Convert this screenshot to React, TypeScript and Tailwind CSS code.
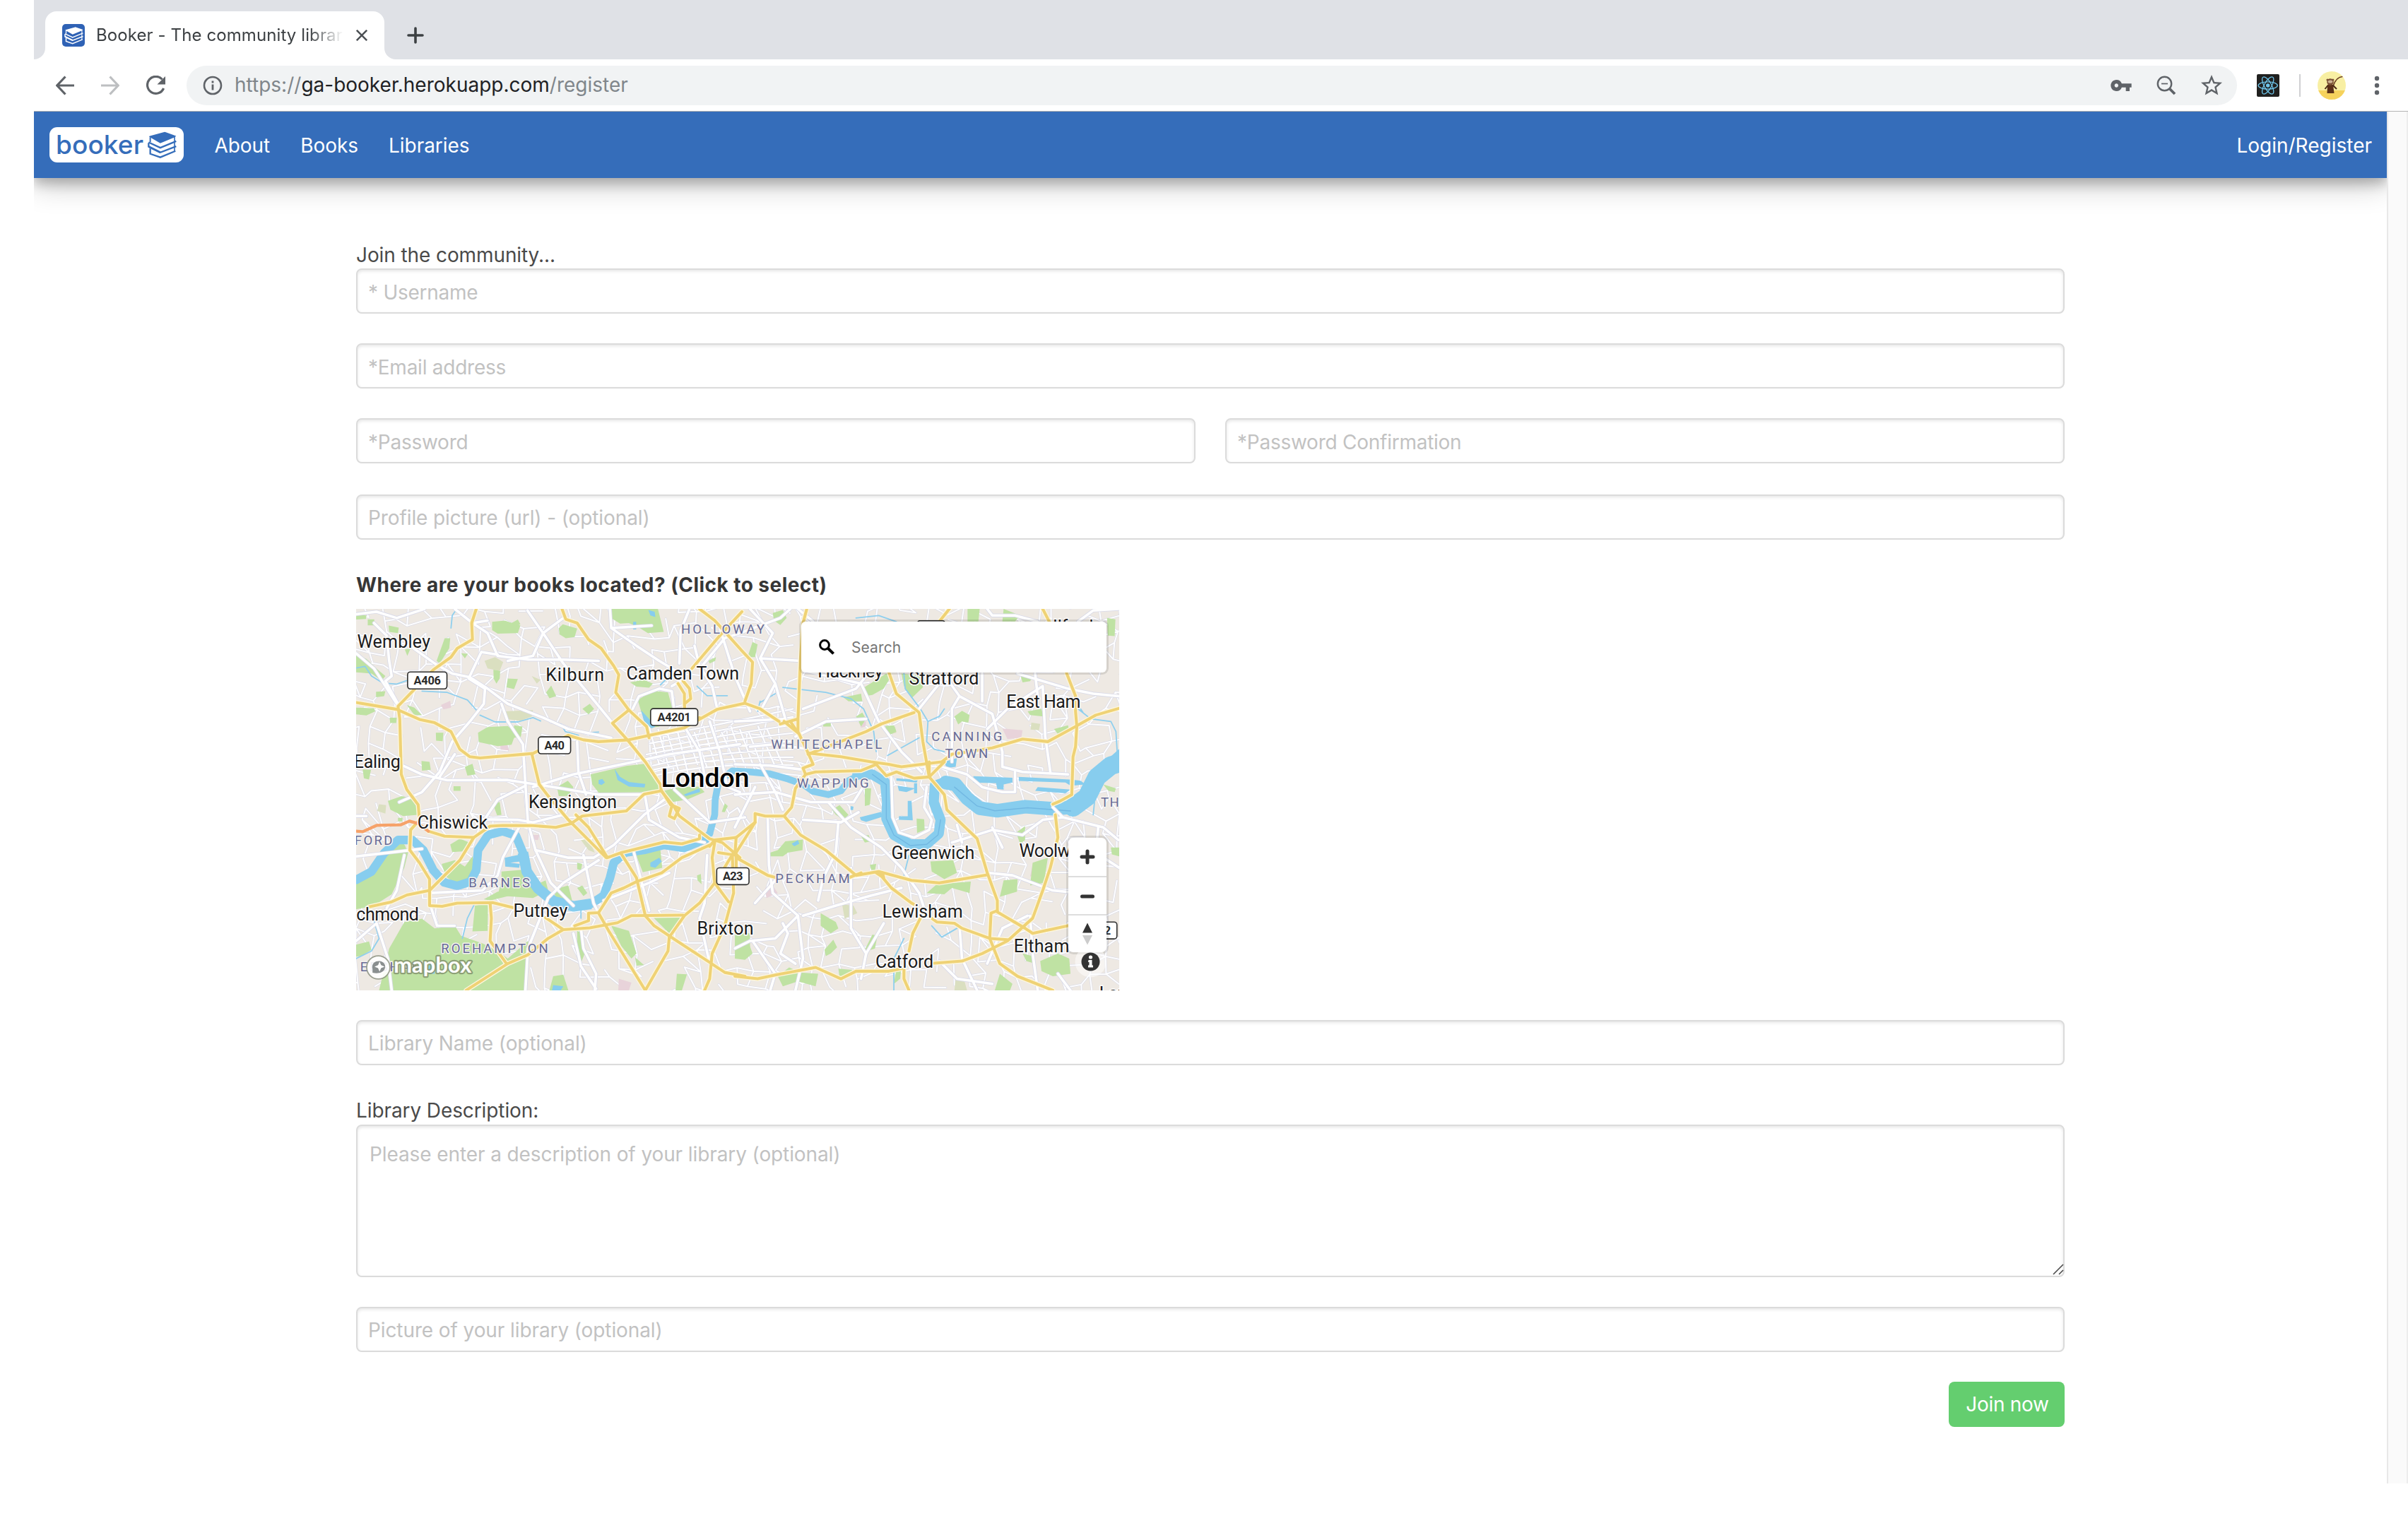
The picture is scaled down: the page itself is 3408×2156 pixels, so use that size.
import React from "react";
import { MdVpnKey, MdStarBorder } from "react-icons/md";

/* ---------- map data (map units: 2.8 per screen pixel) ---------- */

// Deterministic street mesh that fills the space between the main roads.
function streetMesh(): string {
  let seed = 11;
  const rnd = () => {
    seed = (seed * 16807) % 2147483647;
    return seed / 2147483647;
  };
  const step = 62;
  const cols = 52;
  const rows = 27;
  const pts: number[][][] = [];
  for (let r = 0; r < rows; r++) {
    pts.push([]);
    for (let c = 0; c < cols; c++) {
      const x = c * step + (rnd() - 0.5) * 46 + Math.sin(r * 0.5) * 24;
      const y = r * step + (rnd() - 0.5) * 46 + Math.sin(c * 0.45) * 26;
      pts[r].push([Math.round(x), Math.round(y)]);
    }
  }
  let d = "";
  for (let r = 0; r < rows - 1; r++) {
    for (let c = 0; c < cols - 1; c++) {
      const [x, y] = pts[r][c];
      const [rx, ry] = pts[r][c + 1];
      const [bx, by] = pts[r + 1][c];
      if (rnd() < 0.6) d += `M${x} ${y}L${rx} ${ry}`;
      if (rnd() < 0.6) d += `M${x} ${y}L${bx} ${by}`;
      if (rnd() < 0.1) d += `M${x} ${y}L${pts[r + 1][c + 1][0]} ${pts[r + 1][c + 1][1]}`;
    }
  }
  return d;
}

function cityMesh(): string {
  let d = "";
  for (let i = 0; i < 14; i++) {
    d += `M${1200 + i * 36} ${500 + (i % 3) * 12}L${1240 + i * 38} ${650 + (i % 4) * 12}`;
    if (i < 8) d += `M${1190 + (i % 3) * 12} ${545 + i * 22}Q1450 ${500 + i * 20} 1770 ${430 + i * 32}`;
  }
  return d;
}

const STREETS = streetMesh();
const CITY = cityMesh();

const PARKS = [
  "M1050 34H1235L1258 125 1195 130 1155 105 1120 90 1085 92 1052 72Z",
  "M578 85 628 80 690 100 680 130 600 132 578 118Z",
  "M655 90 680 76 690 95 670 104Z",
  "M842 110 858 95 915 112 905 145 870 150 845 135Z",
  "M39 215 80 232 125 275 155 300 140 318 100 290 39 285Z",
  "M390 150 412 150 408 190 370 250 358 240Z",
  "M232 195 255 190 242 220Z",
  "M168 100 208 108 205 130 170 125Z M85 75h26v24h-26Z M39 55 80 60 78 74 39 76Z",
  "M455 210 482 212 470 230Z M583 275 610 280 608 310 595 330 584 310Z",
  "M640 310 680 312 665 352 635 345Z M792 365 812 338 832 380 805 388Z",
  "M118 362 155 360 150 380 118 384Z M39 425 110 428 115 440 80 456 39 452Z",
  "M240 415 270 425 300 455 270 455Z M172 465 200 465 198 486 174 486Z",
  "M522 525 560 502 640 498 660 515 666 495 698 500 692 540 665 545 655 572 600 578 525 562Z",
  "M355 525 385 525 382 558 356 556Z M936 430 965 410 982 430 960 452Z",
  "M1155 395 1215 358 1275 365 1290 420 1300 450 1240 500 1205 505 1170 445Z",
  "M1125 325 1180 315 1215 330 1200 346 1150 342Z M1435 240 1465 225 1462 240 1440 250Z",
  "M968 690 1110 656 1200 646 1245 715 1235 760 1000 762 975 730Z",
  "M1258 755 1320 740 1400 738 1420 760 1350 790 1290 800 1262 775Z",
  "M835 740 878 715 900 740 880 775 842 776Z M298 637 330 640 335 672 300 675Z",
  "M470 660 500 648 512 690 480 695Z M65 670 98 672 90 710 70 705Z M425 737h28v18h-28Z",
  "M165 795 220 776 275 788 283 850 225 855 175 830Z",
  "M580 805 608 800 615 850 598 852Z M205 862h18v14h-18Z",
  "M39 1125 110 1080 160 990 225 955 245 1000 230 1060 180 1165 110 1210 39 1225Z",
  "M412 968 450 945 488 960 460 995 420 998Z",
  "M378 1045 430 1030 470 1055 500 1015 515 1060 485 1105 430 1120 395 1095Z",
  "M615 1075 700 1068 712 1095 720 1140 790 1110 800 1150 740 1180 600 1170 615 1110Z",
  "M825 1145 880 1130 895 1190 860 1200 828 1190Z M915 1140 935 1130 955 1160 940 1172Z",
  "M510 1210 562 1200 560 1310 500 1312Z M545 1185 600 1155 680 1150 650 1170 570 1190Z",
  "M230 1275 300 1262 350 1300 430 1290 455 1330 540 1360 600 1390 640 1420 720 1350 728 1390 712 1546H130L170 1380Z",
  "M1145 1000 1245 990 1252 1060 1175 1078Z M1390 1090 1405 1085 1408 1125 1392 1110Z",
  "M1218 1258 1330 1256 1280 1320Z M1050 1290 1120 1310 1150 1400 1130 1420 1090 1370Z",
  "M915 1310 940 1320 945 1400 925 1450 915 1390Z M1540 1320h60v80h-50Z",
  "M39 1365 90 1352 100 1385 60 1410 39 1412Z M820 1490 860 1484 880 1546H805Z",
  "M1310 1480 1350 1482 1330 1546H1305Z M1500 805 1512 815 1500 840 1488 838Z",
  "M1145 1415 1180 1446 1150 1448Z M915 1040 935 1045 930 1070 915 1065Z",
];

const PARKS_EAST = [
  "M150 50 190 38 205 70 180 98 155 80Z M70 165 90 175 80 225 50 225Z",
  "M922 34H970L965 84H922Z M1065 34 1130 60 1110 84 1060 84Z M505 350 600 290 620 300 590 350 545 375 515 380Z",
  "M660 290 740 300 745 345 700 388 670 340Z M430 385 500 370 505 400 450 400Z",
  "M870 460 900 438 930 455 925 485 900 480 885 492Z M480 460 505 445 520 470 500 500Z",
  "M1160 440 1215 430 1222 460 1170 455Z M1130 290 1180 300 1170 320 1140 325Z M1475 70 1508 75 1505 142 1478 140Z",
  "M1265 510 1320 495 1325 515 1280 530Z M595 498 630 495 640 520 610 535Z M350 482h30v18h-30Z",
  "M385 830 415 812 450 850 430 870 400 850Z M720 865 750 868 752 910 722 922Z M515 745 540 745 535 810 515 815Z",
  "M140 1000 170 990 200 955 270 948 268 990 210 1000 190 1015 140 1015Z",
  "M775 1035 865 1030 880 1080 830 1105 780 1075Z M760 1160 800 1125 935 1115 930 1160 860 1140 830 1165Z",
  "M1115 920 1150 895 1150 950 1130 965Z M1065 1110 1120 1105 1118 1155 1050 1175Z M1180 1040 1240 1020 1225 1120 1170 1130Z",
  "M340 1240 400 1275 410 1300 380 1320 340 1290Z M0 1330 50 1345 70 1400 40 1425 0 1420Z",
  "M170 1490 215 1455 260 1475 330 1480 320 1530 250 1510 190 1530Z M410 1460 465 1465 455 1490 415 1495Z",
  "M355 1385 390 1345 405 1375 380 1400 360 1410Z M545 1325 565 1330 555 1380 510 1395Z",
  "M1210 1430 1280 1400 1325 1420 1330 1480 1260 1490 1215 1470Z M1050 1480 1100 1520 1090 1546H1030Z",
  "M1140 1400 1180 1410 1190 1440 1155 1430Z M535 1048 560 1045 555 1070 540 1068Z M640 1460 660 1450 655 1500 630 1520Z",
  "M500 935 530 930 540 955 515 960Z M1460 730 1510 745 1505 760 1480 755Z M1490 980h34v35l-30-8Z",
];

const OLIVE = "M625 440 740 435 735 460 690 478 630 470Z M548 240 590 225 622 245 608 280 560 270Z M130 808 158 812 155 845 122 835Z M930 950 960 945 985 1000 960 990Z M575 1485 612 1495 600 1530 560 1530Z M1965 1205 2010 1210 2025 1240 1975 1262Z M2715 485 2750 490 2745 515 2712 512Z M2415 1500 2450 1510 2460 1546H2410Z M735 300 770 315 755 330Z M2135 505 2175 500 2180 525 2150 532Z";
const PINK = "M375 415 412 398 415 425 385 432Z M610 572 640 575 645 595 612 592Z M1080 1500 1130 1515 1120 1546H1078Z M2600 508 2680 515 2675 545 2620 550Z M1660 1140 1690 1130 1710 1160 1665 1180Z M2720 1045 2740 1035 2730 1085 2710 1095Z M740 930 765 930 760 950 742 948Z M2035 485 2060 480 2058 500 2040 505Z";

const THAMES_WEST =
  "M39 1108 100 1075 150 1002 205 950 262 950 305 990 345 1070 388 1118 440 1132 492 1115 515 1070 522 990 562 930 620 915 672 932 700 1000 715 1075 760 1142 822 1193 900 1213 970 1203 1020 1170 1045 1100 1060 1040 1100 1005";
const THAMES_MID =
  "M1095 1005 1180 993 1260 973 1340 985 1400 960 1440 925 1460 850 1462 790 1475 720 1530 676 1600 680 1680 688 1750 708 1812 730 1850 757 1910 770 1960 755 1990 715 2040 690";
const THAMES_LOOP =
  "M2025 690 2085 690 2135 720 2143 800 2140 865 2170 930 2235 967 2300 967 2348 925 2355 870 2328 800 2332 735 2380 718";
const THAMES_EAST =
  "M2375 722 2415 730 2460 785 2510 824 2580 834 2690 818 2800 826 2880 820 2935 780 2975 700 3030 655 3080 610";

const WATER_FILL = [
  "M1168 435 1200 470 1225 500 1210 508 1180 480Z",
  "M1063 668 1085 700 1120 720 1185 728 1182 742 1120 738 1075 712Z",
  "M1000 712 1015 708 1025 722 1012 732 1000 728Z",
  "M1338 770 1400 745 1402 760 1345 776Z",
  "M628 1020 688 1008 692 1035 650 1040 688 1045 685 1060 630 1055Z",
  "M1205 1040 1240 1020 1250 1035 1225 1060 1205 1055Z",
  "M1197 38 1222 45 1225 66 1205 60Z M1137 85h12v30h-12Z M820 1525 860 1530 850 1546H815Z",
  "M2485 697 2640 703 2640 722 2605 730 2605 750 2580 748 2575 725 2485 722Z",
  "M2665 700 2865 710 2910 715 2930 730 2870 735 2850 722 2665 716Z M2740 740 2870 750 2850 765 2730 755Z",
  "M2035 860 2120 838 2125 858 2060 878 2040 872Z M2225 795 2240 795 2245 872 2190 870 2190 856 2225 856Z",
  "M2180 705 2265 712 2260 722 2180 715Z M2185 735 2255 745 2220 760 2190 755Z M2250 725 2262 725 2262 765 2250 765Z",
  "M2000 815 2010 818 2008 832 1998 830Z M1765 965 1790 950 1795 965 1775 975Z M330 1440 360 1438 350 1480 320 1480Z",
  "M2370 640 2420 625 2415 660 2380 665Z M1415 925h40l-20 35-25 10Z",
];

const STREAMS =
  "M39 268 75 262 100 300 145 328 200 332 240 318 M300 360 400 365 480 395 520 440 M530 455 590 482 680 482 740 465 770 478 M850 490 868 520 920 535 M945 525 1000 522 M415 110 420 60 438 34 M1245 335 1275 305 1330 300 M1390 340 1430 378 1510 378 M1640 405 1700 370 M2210 290 2215 350 2275 430 2305 480 2300 560 2330 590 2370 600 M2305 480 2350 460 2370 430 M1730 345 1900 365 2000 390 2050 430 2090 520 2100 600 M2145 615 2270 545 M2020 70 2110 60 2180 85 M2900 430 2950 470 3030 480 3050 520 3055 600 M2865 310 2890 400 2920 445 M110 1270 130 1340 100 1390 39 1420 M930 1220 930 1260 M460 1340 480 1260 510 1200 M2210 1090 2230 1010 M2320 1290 2360 1335 2420 1300 M2170 1546 2170 1420 2210 1340 M1630 440 1640 400 M2960 850 2965 800";

const WHITE_ROADS = [
  "M39 55 120 45 200 70 310 34 M110 90 160 140 170 240 180 300 155 320 205 410",
  "M39 210 110 270 200 410 M260 185 350 250 420 290 490 305 560 350 640 410 780 465 880 510 1050 545",
  "M430 34 500 90 560 130 600 220 720 235 860 235 1000 240",
  "M718 40 780 130 860 250 960 370 1050 480 M780 130 740 220 640 240",
  "M860 70 780 130 M500 90 560 80 M535 205 600 215 M535 205 485 310 550 350 545 410 490 480 420 560 370 680 300 760 210 800",
  "M615 410 640 480 700 570 708 700 720 880 750 990 810 1120 900 1210",
  "M225 655 300 690 400 713 640 712 820 740 1000 770 1180 770",
  "M370 700 430 610 M710 735 600 790 540 880 M740 740 900 690 1140 640 1280 610 1560 570",
  "M39 855 80 855 M300 985 39 1015 M540 868 680 870 740 880 860 850 M690 890 620 1020 600 1090 540 1150 330 1160",
  "M1045 34 1050 110 1150 180 1240 240 1340 300 M1320 250 1325 120 1360 34 M1050 110 1210 100",
  "M1135 430 1160 380 1240 350 1290 360 1300 440 1330 500 M915 560 920 680 950 770 M1325 320 1290 340",
  "M1380 180 1400 260 1450 340 1470 430 M1340 500 1400 600 1430 740 M1440 480 1480 600 1510 740 1560 760",
  "M1185 780 1200 870 1320 940 1420 960 M1300 750 1440 880 1580 860 M1430 1010 1420 1200 1400 1260 1440 1440",
  "M750 990 880 1020 980 1020 1060 970 1180 850 1260 790 M940 1010 980 1200 1000 1240",
  "M1000 1030 860 1120 800 1180 760 1280 720 1380 710 1546 M930 1300 940 1380 990 1480 985 1546",
  "M900 1320 930 1450 990 1540 M1140 1000 1200 1230 M1020 1190 1200 1120 1280 1080",
  "M230 1010 200 1150 160 1220 M120 1280 39 1350 M120 1280 165 1420 180 1546 M330 1200 360 1290 430 1290",
  "M1410 260 1500 150 1560 130 M1480 110 1540 300 1600 440 M1560 130 1720 70 1760 34",
  "M1600 34 1690 130 1640 230 1800 240 M1640 230 1700 330 1740 470 M1700 330 1640 440",
  "M1790 34 1850 84 M1820 280 2040 330 2110 480 2200 600 2280 680 M1810 430 2020 350 2060 300",
  "M1780 540 1900 480 2060 470 M1740 470 1540 480 M1600 580 1700 570 1830 590",
  "M1540 650 1680 655 1800 670 M1540 770 1700 760 1840 800 2010 800 2060 720 M1640 650 1700 760 1730 830",
  "M1540 900 1620 740 M1670 860 1675 1050 1690 1160 1790 1250 1810 1420 1780 1546",
  "M1810 870 1960 880 2030 840 M1910 800 2000 900 2120 980 2200 1060 2270 1160",
  "M2160 700 2165 860 2190 920 2250 940 2310 910 2320 870 2290 820 2300 740",
  "M2270 430 2350 330 2380 310 2430 380 2400 430 2400 640 M2430 380 2560 450 2600 600 2600 660 2680 680 2860 690",
  "M2360 660 2460 690 2520 740 2600 760 2650 760 2650 680 M2540 510 2620 430 2760 340 2770 540 2790 680",
  "M2520 290 2520 400 M2730 290 2740 380 M2660 290 2860 350 2960 370 3060 380",
  "M2540 34 2560 60 2650 60 2740 84 M2900 84 2960 40 3060 34",
  "M2400 960 2560 910 2680 930 2760 870 2840 860 3000 900 3060 950 M2420 890 2440 960 M2840 860 2800 820",
  "M2540 1080 2640 1090 2800 1150 2900 1160 M2560 900 2600 980 M2980 900 2970 1000 3063 1060",
  "M1810 1250 1940 1210 2080 1170 2200 1140 M1950 880 1940 1000 1890 1100 1870 1190",
  "M1540 1380 1600 1350 1700 1340 1790 1250 M1620 1200 1700 1110 M1610 1350 1700 1480 1680 1546",
  "M2270 1160 2290 1220 M2130 1280 2060 1400 2040 1500 M2430 1290 2440 1420 2500 1546",
  "M2540 1440 2600 1300 2700 1250 M2710 1250 2720 1400 2740 1546 M2820 1480 2870 1546 M2860 1280 3063 1340",
  "M1730 1280 1750 1320 1720 1400 1780 1440 M2350 1430 2420 1500 2560 1520 M2000 1060 2000 1300 2060 1400",
];

const YELLOW_ROADS = [
  "M39 405 200 432 290 472 350 485 415 520 450 590 490 620 530 625 740 607 880 535 940 553 1000 560 1120 553 1340 505 1470 432 1580 408 1640 430 1715 480",
  "M515 34 497 90 500 155 440 190 415 225 345 275 205 420 212 470 218 690 240 750 285 810 290 870 255 910 252 990 290 1040 330 1105 330 1210 380 1213 440 1200 580 1198 660 1218",
  "M325 915 390 935 505 940 570 895 620 892 740 893 830 900 890 885 935 855 1110 835 1180 768 1248 755",
  "M855 34 870 75 915 90 960 155 1010 190 1060 260 1080 295 1068 365 1120 435 1190 500 1200 545",
  "M1120 435 1055 487 1120 560 1185 640 1245 730 1248 755 1300 820 1320 855 1440 945 1490 960 1560 1020",
  "M735 607 765 730 800 775 880 870 1030 1020 1050 1015 M910 850 960 900 1035 1020 1090 1000 1260 958 1330 965 1400 945 1400 930",
  "M1090 1005 1150 1100 1185 1250 M1250 755 1285 810 1320 825 1300 865 1280 855 1290 815",
  "M505 940 450 1030 330 1150 240 1168 180 1195 90 1215 M570 1200 575 1260 570 1350 635 1440",
  "M475 1546 640 1440 720 1405 800 1340 860 1305 790 1258 M860 1305 965 1298 1075 1278 1130 1250 1335 1248",
  "M905 1290 960 1270 960 1240 1000 1238 1050 1160 1100 1140 1150 1115 1250 1080 1330 1020 1440 970",
  "M1000 1240 1040 1310 1185 1546 1240 1450 1275 1390 1280 1335 1340 1250 1400 1200 1460 1120 1450 1020 1460 960",
  "M1185 1250 1220 1290 1310 1350 1440 1435 1500 1475 1580 1490 M1530 1010 1535 1160 1500 1290 1450 1400 1440 1500 1420 1546",
  "M1460 1120 1515 1195 M1475 1000 1540 1010 1545 940 1460 950 1440 975 M1480 1090 1535 1000",
  "M1568 45 1480 140 1370 270 M1400 34 1460 80 1568 200 1610 245 1605 330 1580 400",
  "M1315 330 1340 370 1340 410 1365 390 1360 350 1335 320 M1340 410 1345 490 1400 465",
  "M1825 34 1810 90 1800 230 1790 470 1720 490 M1790 470 1790 520 1830 605 1850 650 1810 665 1820 690 1780 745 1765 820 1735 855 1660 855 1620 845 1620 880 1545 1000 1545 1110",
  "M1735 480 1790 525 1760 480 M1545 940 1620 880 M1830 605 1960 620 2080 640 2150 650 2200 660 2360 640 2400 610 2560 585 2680 550 2780 560 2890 500 2970 455 3063 428",
  "M1820 690 1860 680 2040 675 2100 650 2140 695 2180 680 2250 705 2310 700 2370 640",
  "M1830 610 2060 520 2120 490 2250 445 M2390 34 2350 84 M2150 285 2180 370 2270 445 2285 560 2310 700 2370 770 2380 830 2500 945 2540 1080 2580 1190 2580 1235 2690 1300 2720 1320 2860 1290",
  "M2310 700 2310 640 M2760 34 2830 170 2855 290 2890 380 2890 440 2895 500 2890 580 2880 620 2875 770 2830 795 2800 808",
  "M2810 850 2820 940 2790 1060 2760 1150 2720 1260 2620 1350 2520 1400 2440 1430 2330 1438",
  "M1735 855 1800 930 1900 990 2020 1090 2110 1075 2240 1110 2350 1120 2540 1088",
  "M1545 1020 1670 1090 1700 1098 M1995 1098 2040 1080 M2110 1080 2160 1140 2240 1200 2250 1205 M2100 1080 2130 1100 2125 1080",
  "M2275 1260 2245 1320 2230 1390 M2210 1460 2210 1500 2230 1546 M2320 1260 2340 1275 2410 1280 2440 1300 2550 1340 2620 1345",
  "M2580 1230 2555 1240 2550 1340 2590 1440 2660 1490 2800 1546",
  "M1540 1490 1630 1500 1700 1485 1860 1455 1960 1500 2020 1470 2150 1470 2200 1460",
];

type Label = [string, number, number, number];
const TOWNS: Label[] = [
  ["Wembley", 43, 187, 290], ["Kilburn", 790, 319, 232], ["Camden Town", 1110, 314, 447], ["Ealing", 30, 665, 185],
  ["Kensington", 722, 825, 350], ["Chiswick", 282, 904, 278], ["chmond", 40, 1268, 248], ["Putney", 662, 1255, 215],
  ["Brixton", 1390, 1324, 224], ["Hackney", 1868, 305, 258], ["Stratford", 2230, 334, 277], ["East Ham", 2616, 426, 294],
  ["Greenwich", 2160, 1025, 330], ["Woolwich", 2667, 1018, 290], ["Lewisham", 2124, 1257, 319], ["Eltham", 2645, 1396, 220],
  ["Catford", 2097, 1457, 230], ["Ilford", 2800, 128, 160], ["Lon", 2984, 1582, 110],
];
const DISTRICTS: Label[] = [
  ["HOLLOWAY", 1327, 132, 330], ["FORD", 33, 968, 150], ["BARNES", 485, 1138, 243], ["ROEHAMPTON", 376, 1397, 424],
  ["ERSHAM", 55, 1470, 250], ["WHITECHAPEL", 1683, 588, 440], ["CANNING", 2319, 559, 280], ["TOWN", 2373, 625, 170],
  ["WAPPING", 1786, 742, 285], ["PECKHAM", 1700, 1120, 295], ["THAM", 2990, 818, 160],
];
const SHIELDS: [string, number, number, number, number][] = [
  ["A406", 243, 284, 156, 108], ["A4201", 1206, 429, 187, 132], ["A40", 761, 541, 128, 80], ["A23", 1468, 1060, 128, 80], ["A2", 2944, 1275, 110, 62],
];

function MapCanvas() {
  return (
    <svg className="block h-[540px] w-[1080px]" viewBox="39 34 3024 1512" fontFamily="Roboto, sans-serif" fill="none" strokeLinejoin="round" strokeLinecap="round">
      <rect x="39" y="34" width="3024" height="1512" fill="#eee9e3" />
      <path d={STREETS} stroke="#dcdde9" strokeWidth="9" />
      <path d={STREETS} stroke="#ffffff" strokeWidth="5" />
      <path d={CITY} stroke="#dadbe8" strokeWidth="10" />
      <path d={CITY} stroke="#ffffff" strokeWidth="6" />
      <path d={OLIVE} fill="#dadfc0" />
      <path d={PINK} fill="#e8d3da" />
      <g fill="#bfe2a3">
        {PARKS.map((d) => <path key={d} d={d} />)}
        <g transform="translate(1540 0)">{PARKS_EAST.map((d) => <path key={d} d={d} />)}</g>
      </g>
      <path d={STREAMS} stroke="#8fcfee" strokeWidth="5" />
      <g stroke="#87cdee">
        <path d={THAMES_WEST} strokeWidth="34" />
        <path d="M700 1000 715 1075 760 1142 822 1193 900 1213 970 1203" strokeWidth="42" strokeLinecap="butt" />
        <path d={THAMES_MID} strokeWidth="27" />
        <path d={THAMES_LOOP} strokeWidth="40" />
        <path d={THAMES_EAST} strokeWidth="54" />
        <path d="M2880 820 2935 780 2975 700 3030 655 3080 640" strokeWidth="74" />
      </g>
      <g fill="#87cdee">{WATER_FILL.map((d) => <path key={d} d={d} />)}</g>
      <path d="M2085 690 2140 730 2140 865 2170 930 2235 972 2300 967 2345 930 2355 870M2410 740 2500 815 2570 834 2700 822 2870 835" stroke="#72b8e2" strokeWidth="4" />
      {WHITE_ROADS.map((d) => <path key={d} d={d} stroke="#dadbe8" strokeWidth="15" />)}
      {WHITE_ROADS.map((d) => <path key={d} d={d} stroke="#ffffff" strokeWidth="10" />)}
      {YELLOW_ROADS.map((d) => <path key={d} d={d} stroke="#fdf6dd" strokeWidth="19" />)}
      {YELLOW_ROADS.map((d) => <path key={d} d={d} stroke="#efd275" strokeWidth="11.5" />)}
      <path d="M39 915 65 917 120 892 215 890 250 875 285 885 325 915" stroke="#f6a269" strokeWidth="12" />
      <rect x="2263" y="81" width="110" height="60" rx="10" fill="#fff" stroke="#2b2b2b" strokeWidth="4" />

      <g fill="#676b96" fontSize="52" stroke="#f4f1ee" strokeWidth="8" style={{ paintOrder: "stroke" }}>
        {DISTRICTS.map(([t, x, y, w]) => (
          <text key={t} x={x} y={y} textLength={w}>{t}</text>
        ))}
      </g>
      <g fill="#1b1b1b" fontSize="70" stroke="#fdfcfb" strokeWidth="9" style={{ paintOrder: "stroke" }}>
        {TOWNS.map(([t, x, y, w]) => (
          <text key={t} x={x} y={y} textLength={w}>{t}</text>
        ))}
        <text x="1247" y="739" fontSize="106" fontWeight="500" textLength="350" fill="#000">London</text>
      </g>
      {SHIELDS.map(([t, x, y, w, tw]) => (
        <g key={t}>
          <rect x={x} y={y} width={w} height="67" rx="11" fill="#fff" stroke="#2e2e2e" strokeWidth="4.5" />
          <text x={x + (w - tw) / 2} y={y + 50} textLength={tw} fontSize="46" fontWeight="700" fill="#2a2a2a">{t}</text>
        </g>
      ))}
      <g>
        <circle cx="127" cy="1455" r="46" fill="#fff" fillOpacity="0.9" stroke="#7d8472" strokeOpacity="0.75" strokeWidth="5" />
        <path d="M104 1462C98 1436 118 1428 134 1430C152 1434 158 1448 152 1462C144 1478 124 1480 104 1476Z" fill="#8a8f90" />
        <path d="M132 1432 138 1446 152 1452 138 1458 132 1472 126 1458 112 1452 126 1446Z" fill="#fff" />
        <text x="188" y="1477" fontFamily="Lato, sans-serif" fontSize="86" fontWeight="700" textLength="308" fill="#fff" stroke="#86966f" strokeOpacity="0.85" strokeWidth="12" style={{ paintOrder: "stroke" }}>mapbox</text>
      </g>
    </svg>
  );
}

function LocationMap() {
  return (
    <div className="relative h-[540px] w-[1080px] overflow-hidden">
      <MapCanvas />
      <div className="absolute right-[18px] top-[18px] flex h-[72px] w-[432px] items-center rounded-[6px] bg-white pl-[25px] shadow-[0_0_0_3px_rgba(0,0,0,0.1)]">
        <svg className="size-[22px]" viewBox="0 0 22 22" fill="none" stroke="#000">
          <circle cx="8" cy="8" r="6.4" strokeWidth="3" />
          <path d="M13 13l7.6 7.4" strokeWidth="4" />
        </svg>
        <input readOnly placeholder="Search" className="ml-[24px] w-72 bg-transparent pt-[2px] text-[21px] tracking-[0.1px] text-[#757575] placeholder:text-[#757575] outline-none" />
      </div>
      <div className="absolute left-[1008px] top-[324px] flex w-[54px] flex-col rounded-[7px] bg-white shadow-[0_0_0_3px_rgba(0,0,0,0.1)]">
        <button className="flex h-[56px] items-center justify-center border-b-2 border-[#dddddd]">
          <svg className="size-[22px]" viewBox="0 0 22 22" stroke="#333" strokeWidth="5" strokeLinecap="round"><path d="M11 3v16M3 11h16" /></svg>
        </button>
        <button className="flex h-[54px] items-center justify-center border-b-2 border-[#dddddd] pt-[2px]">
          <svg className="size-[22px]" viewBox="0 0 22 22" stroke="#333" strokeWidth="5" strokeLinecap="round"><path d="M3.500 11h15" /></svg>
        </button>
        <button className="flex h-[52px] items-center justify-center">
          <svg className="h-[32px] w-[14px]" viewBox="0 0 14 32"><path d="M7 0.500 14 14.500H0Z" fill="#333" /><path d="M0 18H14L7 31.500Z" fill="#ccc" /></svg>
        </button>
      </div>
      <svg className="absolute left-[1017px] top-[477px] size-[45px]" viewBox="0 0 45 45">
        <circle cx="22.500" cy="22.500" r="22" fill="#fff" fillOpacity="0.5" />
        <circle cx="22.500" cy="22.500" r="13" fill="#333" />
        <circle cx="22.500" cy="16" r="2.600" fill="#fff" />
        <path d="M19.500 20h5v7.500h1.500v3h-7v-3h1.500v-4.500h-1.500z" fill="#fff" />
      </svg>
    </div>
  );
}

/* ---------- icons ---------- */

function BookStack({ ink, paper, className }: { ink: string; paper: string; className: string }) {
  return (
    <svg className={className} viewBox="508 108 124 116">
      <path d="M516 132V204L562 219 624 192V128L580 112Z" fill={paper} />
      <path d="M514 130Q514 127 520 126L578 110Q582 109 586 111L630 127 624 132 562 158Z" fill={ink} />
      <g fill="none" stroke={ink} strokeLinejoin="miter">
        <path d="M519 132V153" strokeWidth="6" />
        <path d="M512 154 562 177 630 149" strokeWidth="7" />
        <path d="M512 156V172L562 197 630 171" strokeWidth="7" />
        <path d="M519 180V203L562 218 627 191" strokeWidth="7" />
        <path d="M512 172 562 197" strokeWidth="9" />
        <path d="M623 130V193" strokeWidth="5" />
      </g>
    </svg>
  );
}

function ReactTile() {
  return (
    <svg className="size-8" viewBox="0 0 32 32" fill="none" stroke="#6fc5ea" strokeWidth="1.300">
      <rect width="32" height="32" rx="2" fill="#20201f" stroke="none" />
      <circle cx="15.700" cy="16" r="2.700" fill="#6fc5ea" stroke="none" />
      <ellipse cx="15.700" cy="16" rx="13.600" ry="5.100" />
      <ellipse cx="15.700" cy="16" rx="13.600" ry="5.100" transform="rotate(60 15.700 16)" />
      <ellipse cx="15.700" cy="16" rx="13.600" ry="5.100" transform="rotate(120 15.700 16)" />
    </svg>
  );
}

function Avatar() {
  return (
    <svg className="size-10 rounded-full" viewBox="0 0 40 40">
      <rect width="40" height="40" fill="#f8efa3" />
      <rect y="27" width="40" height="13" fill="#f6d25d" />
      <path d="M22 21C25 12 29 8 35 7.500" stroke="#6b3f22" strokeWidth="1.700" fill="none" strokeLinecap="round" />
      <path d="M14 19 22 19 23.500 31H13.500Z" fill="#5b3018" />
      <path d="M14.500 20 10.500 25M22 20 27 25" stroke="#4a2a17" strokeWidth="2" />
      <circle cx="18" cy="15" r="4.800" fill="#7a5136" />
      <circle cx="14" cy="12" r="1.600" fill="#7a5136" /><circle cx="21.800" cy="12" r="1.600" fill="#7a5136" />
      <ellipse cx="18" cy="14.600" rx="3.300" ry="2.200" fill="#cdb394" />
    </svg>
  );
}

/* ---------- browser frame ---------- */

function TabStrip() {
  return (
    <div className="flex h-[84px] items-end bg-[#dfe1e6]">
      <svg className="size-4" viewBox="0 0 16 16"><path d="M16 0V16H0A16 16 0 0 0 16 0Z" fill="#fff" /></svg>
      <div className="flex h-[68px] w-[480px] items-center rounded-t-[16px] bg-white pl-6">
        <div className="flex size-8 items-center justify-center rounded-[5px] bg-[#2f62b5]">
          <BookStack ink="#ffffff" paper="#2f62b5" className="h-[25px] w-[27px]" />
        </div>
        <div className="ml-[16px] w-[350px] overflow-hidden whitespace-nowrap text-[24px] leading-[34px] tracking-[0.1px] text-[#3c4043] [mask-image:linear-gradient(to_right,#000_86%,transparent_100%)]">
          Booker - The community library
        </div>
        <svg className="ml-[18px] size-4" viewBox="0 0 16 16" stroke="#4c5054" strokeWidth="2.600"><path d="M.8.8l14.400 14.400M15.200.8L.8 15.200" /></svg>
      </div>
      <svg className="size-4" viewBox="0 0 16 16"><path d="M0 0V16H16A16 16 0 0 1 0 0Z" fill="#fff" /></svg>
      <svg className="mb-[22px] ml-4 size-6" viewBox="0 0 24 24" stroke="#3c4043" strokeWidth="3.600" strokeLinecap="round"><path d="M12 2v20M2 12h20" /></svg>
    </div>
  );
}

function Toolbar() {
  return (
    <div className="flex h-[74px] items-center border-b border-[#b3b3b3] bg-white pl-[31px]">
      <svg className="h-7 w-[26px]" viewBox="0 0 26 28" fill="none" stroke="#5f6368" strokeWidth="3.200"><path d="M26 14H2M13.500 1.500L1.800 14L13.500 26.500" /></svg>
      <svg className="ml-[38px] h-7 w-[26px]" viewBox="0 0 26 28" fill="none" stroke="#bdbfc1" strokeWidth="3.200"><path d="M0 14H24M12.500 1.500L24.200 14L12.500 26.500" /></svg>
      <svg className="ml-[38px] h-7 w-7" viewBox="0 0 28 28" fill="none"><path d="M22.500 5.300A12 12 0 1 0 24.600 18" stroke="#5f6368" strokeWidth="3.200" /><path d="M27 1V12.500H15.500Z" fill="#5f6368" /></svg>
      <div className="ml-[29px] flex h-14 w-[2902px] items-center rounded-full bg-[#f1f3f4] pl-[23px] pr-[18px]">
        <svg className="size-7" viewBox="0 0 28 28" fill="none"><circle cx="14" cy="14" r="12" stroke="#5f6368" strokeWidth="2.600" /><path d="M14 12.500V20.500M14 7.500V10.400" stroke="#5f6368" strokeWidth="2.800" /></svg>
        <div className="mb-[2px] ml-[17px] text-[28px] leading-[40px] text-[#80868b]">
          https://<span className="text-[#202124]">ga-booker.herokuapp.com</span>/register
        </div>
        <MdVpnKey className="ml-auto size-8 text-[#5f6368]" />
        <svg className="ml-8 size-8" viewBox="0 0 32 32" fill="none" stroke="#5f6368"><circle cx="13.500" cy="13.500" r="9.700" strokeWidth="2.400" /><path d="M9 13.500h9" strokeWidth="1.700" /><path d="M20.500 20.500l7.500 7.500" strokeWidth="3.800" /></svg>
        <MdStarBorder className="ml-[30px] size-9 text-[#5f6368]" />
      </div>
      <div className="ml-[28px]"><ReactTile /></div>
      <div className="ml-[28px] h-8 w-[2px] bg-[#cfd0d2]" />
      <div className="ml-[24px]"><Avatar /></div>
      <svg className="ml-[40px] h-8 w-2" viewBox="0 0 8 32" fill="#5f6368"><circle cx="4" cy="6" r="3.200" /><circle cx="4" cy="16" r="3.200" /><circle cx="4" cy="26" r="3.200" /></svg>
    </div>
  );
}

/* ---------- page ---------- */

function NavBar() {
  return (
    <nav className="relative z-10 flex h-[94px] items-center bg-[#356dba] pl-[22px] text-[28px] leading-[42px] text-white shadow-[0_8px_16px_rgba(0,0,0,0.23),0_12px_40px_rgba(0,0,0,0.2)]">
      <div className="mr-[22px] flex h-[50px] w-[190px] items-center rounded-[11px] bg-white text-[#356dba]">
        <span className="ml-[9px] w-[130px] text-[37px] font-medium leading-[50px] tracking-[0.1px]">booker</span>
        <BookStack ink="#356dba" paper="#ffffff" className="h-[39px] w-[41px]" />
      </div>
      {["About", "Books", "Libraries"].map((t) => (
        <a key={t} className="px-[21.500px] pt-[2px] tracking-[-0.05px]">{t}</a>
      ))}
      <a className="ml-auto px-[21px] pt-[2px]">Login/Register</a>
    </nav>
  );
}

const FIELD =
  "block w-full rounded-[8px] border-2 border-[#dbdbdb] bg-white shadow-[inset_0_2px_4px_rgba(10,10,10,0.1)] text-[28px] tracking-[-0.1px] placeholder:text-[#c2c2c2] outline-none";

function Field({ placeholder, required = false }: { placeholder: string; required?: boolean }) {
  return <input readOnly placeholder={placeholder} className={`${FIELD} h-16 ${required ? "px-[15px] pt-[3px] tracking-[-0.25px]" : "px-[15px] pt-px"}`} />;
}

function RegisterForm() {
  return (
    <form className="mx-auto mt-[86px] flex w-[2418px] flex-col text-[28px] leading-[42px] tracking-[-0.1px] text-[#4a4a4a]">
      <p className="-mb-[2px] pt-[2px]">Join the community...</p>
      <Field required placeholder="* Username" />
      <div className="mt-[42px]"><Field required placeholder="*Email address" /></div>
      <div className="mt-[42px] flex gap-[42px]">
        <Field required placeholder="*Password" />
        <Field required placeholder="*Password Confirmation" />
      </div>
      <div className="mt-[44px]"><Field placeholder="Profile picture (url) - (optional)" /></div>
      <p className="mb-[13px] mt-[43px] font-bold tracking-[0.46px] text-[#363636]">Where are your books located? (Click to select)</p>
      <LocationMap />
      <div className="mt-[42px]"><Field placeholder="Library Name (optional)" /></div>
      <p className="-mb-px mt-[43px]">Library Description:</p>
      <div className="relative">
        <textarea readOnly placeholder="Please enter a description of your library (optional)" className={`${FIELD} h-[216px] resize-none px-[17px] pt-[19px]`} />
        <svg className="absolute bottom-[3px] right-[1px] size-[16px]" viewBox="0 0 16 16" stroke="#4d4d4d" strokeWidth="1.600"><path d="M1 15L15 1M9 15L15 9" /></svg>
      </div>
      <div className="mt-[42px]"><Field placeholder="Picture of your library (optional)" /></div>
      <button className="mt-[42px] h-16 w-[164px] self-end rounded-[8px] bg-[#64ce6f] pl-[2px] tracking-[-0.3px] text-white">Join now</button>
    </form>
  );
}

export default function App() {
  return (
    <div className="h-[2156px] w-[3408px] overflow-hidden bg-white pl-12 font-['Inter',sans-serif]">
      <TabStrip />
      <Toolbar />
      <div className="flex h-[1942px]">
        <main className="w-[3330px] overflow-hidden bg-white">
          <NavBar />
          <RegisterForm />
        </main>
        <div className="w-[30px] border-x-2 border-l-[#e8e8e8] border-r-[#ededed] bg-[#fafafa]" />
      </div>
    </div>
  );
}
